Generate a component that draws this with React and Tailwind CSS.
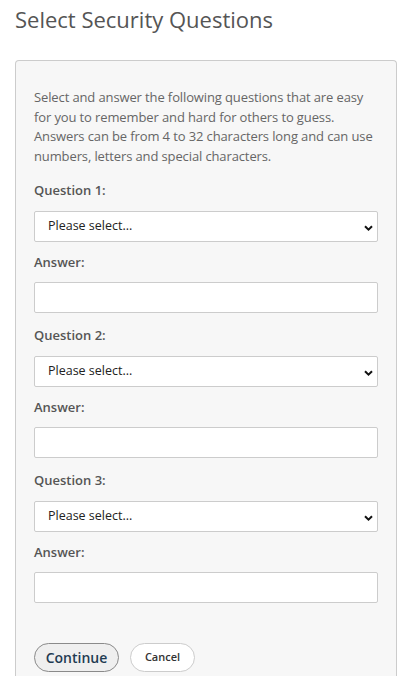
import React from "react";

const Chevron = () => (
  <svg
    className="pointer-events-none absolute right-[5px] top-[14px]"
    width="9"
    height="6"
    viewBox="0 0 9 6"
  >
    <path d="M1 1.2 L4.5 4.6 L8 1.2" fill="none" stroke="#111" strokeWidth="2" />
  </svg>
);

const QuestionGroup = ({ n }) => (
  <div className="mb-[13px]">
    <label className="block mb-[10px] text-[13px] leading-[19.5px] font-semibold text-[#555]">
      Question {n}:
    </label>
    <div className="relative mb-[11px]">
      <select className="block w-full h-[31px] appearance-none bg-white border border-[#ccc] rounded-[2px] pl-[13px] text-[12.5px] text-[#222] outline-none">
        <option>Please select...</option>
      </select>
      <Chevron />
    </div>
    <label className="block mb-[10px] text-[13px] leading-[19.5px] font-semibold text-[#555]">
      Answer:
    </label>
    <input
      type="text"
      className="block w-full h-[31px] bg-white border border-[#ccc] rounded-[2px] outline-none"
    />
  </div>
);

export default function App() {
  return (
    <div
      className="bg-white min-h-[692px] pl-[15px]"
      style={{ fontFamily: '"Open Sans", "Noto Sans", sans-serif' }}
    >
      {/* Title */}
      <h1 className="pt-[5px] mb-[26px] text-[22px] leading-[29px] font-normal text-[#555]">
        Select Security Questions
      </h1>

      {/* Panel */}
      <div className="w-[382px] bg-[#f7f7f7] border border-b-0 border-[#ccc] rounded-t-[4px] px-[18px] pt-[27px] pb-[4px]">
        <p className="mb-[15px] text-[13px] leading-[19.5px] tracking-[-0.12px] text-[#666]">
          Select and answer the following questions that are easy for you to
          remember and hard for others to guess. Answers can be from 4 to 32
          characters long and can use numbers, letters and special characters.
        </p>

        <QuestionGroup n={1} />
        <QuestionGroup n={2} />
        <QuestionGroup n={3} />

        <div className="flex gap-[11px] pt-[27px]">
          <button className="h-[29px] w-[85px] rounded-full border border-[#8a8a8a] bg-[#efefef] text-[14px] font-semibold text-[#1f3b52]">
            Continue
          </button>
          <button className="h-[29px] w-[65px] rounded-full border border-[#ccc] bg-white text-[11px] font-semibold text-[#333]">
            Cancel
          </button>
        </div>
      </div>
    </div>
  );
}
